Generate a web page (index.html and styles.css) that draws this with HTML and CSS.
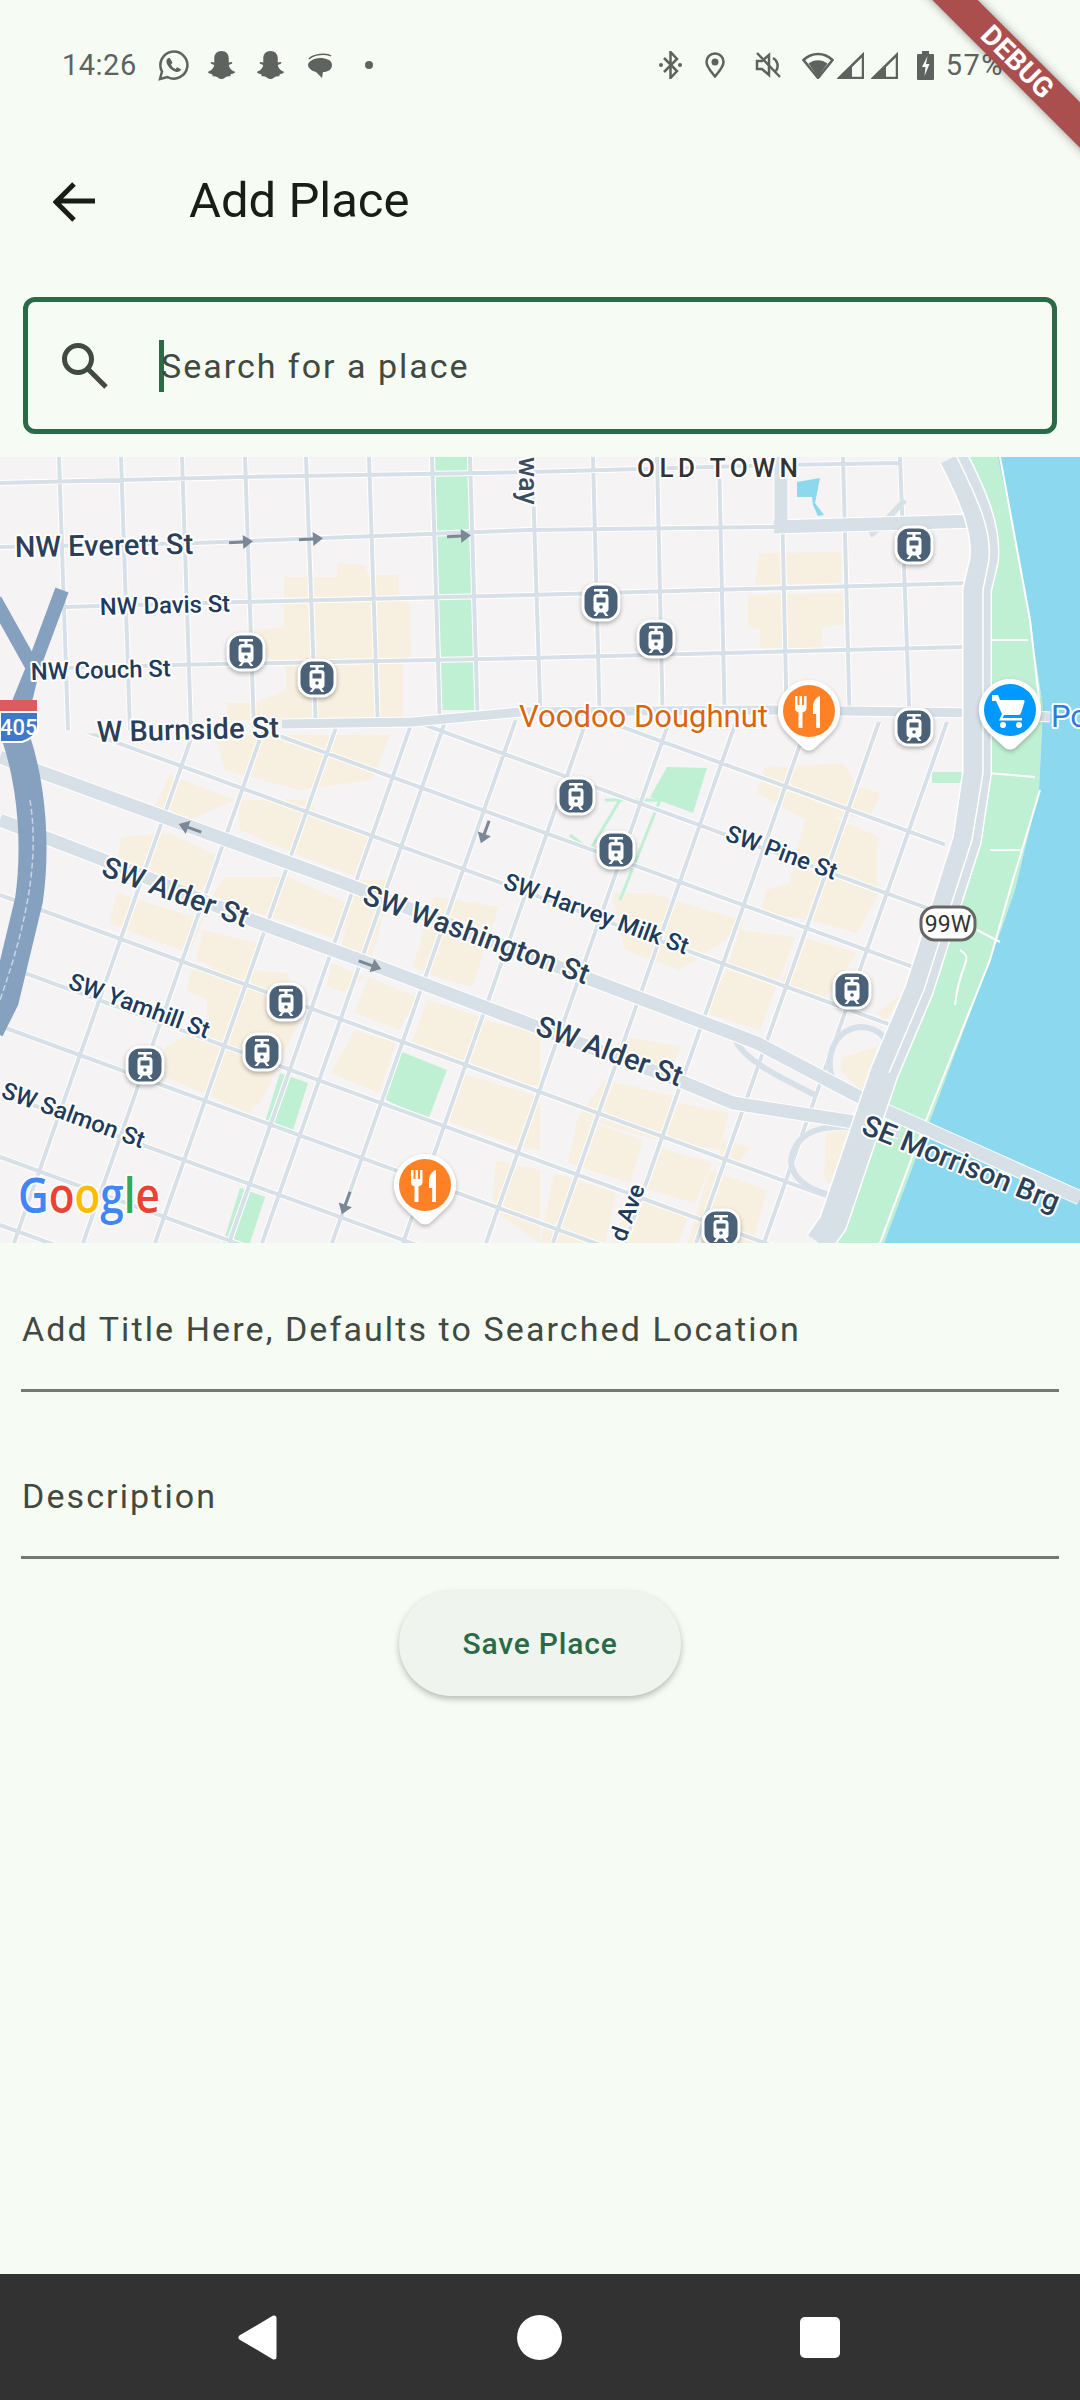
FILE: index.html
```html
<!DOCTYPE html>
<html lang="en">
<head>
    <meta charset="UTF-8">
    <meta name="viewport" content="width=device-width, initial-scale=1.0">
    <title>Add Place</title>
    <link rel="stylesheet" href="styles.css">
</head>
<body>
    <div class="debug-banner">DEBUG</div>

    <div class="status-bar">
        <div class="status-left">
            <span class="status-text">14:26</span>
            <svg class="ic-whatsapp" viewBox="0 0 31 31"><path class="line" d="M2 29l2-7.5A13.5 13.5 0 1 1 9.5 27z"/><path class="solid" d="M10.5 8c-1.5.5-2.5 2.5-2 4.5 1 4 5.500 8.500 10 9.500 2 .3 4-.8 4.500-2.700l-3.800-2-1.700 1.700c-2-.8-3.700-2.500-4.500-4.500l1.500-1.700L11.800 8z"/></svg>
            <svg class="ic-ghost" viewBox="0 0 30 30"><use href="#ghost"/></svg>
            <svg class="ic-ghost ic-ghost2" viewBox="0 0 30 30"><use href="#ghost"/></svg>
            <svg class="ic-bubble" viewBox="0 0 26 25"><path class="solid" d="M13 5c6 0 12 2 12 7s-5 7-8 7h-1l-1 6-6-6C5 18 1 15 1 12s5-7 12-7z"/><path class="line thin" d="M2 6C6 1 20 0 24 3"/></svg>
            <span class="status-dot"></span>
        </div>
        <div class="status-right">
            <svg class="ic-bt" viewBox="0 0 23 28"><path class="line" d="M5 7l13 13-6.500 7V1L18 8 5 21"/><circle class="solid" cx="2" cy="14" r="2"/><circle class="solid" cx="21" cy="14" r="2"/></svg>
            <svg class="ic-pin" viewBox="0 0 20 26"><path class="line" d="M10 1.500A8.500 8.500 0 0 1 18.500 10c0 5-5 10-8.500 14.500C6.500 20 1.500 15 1.500 10A8.500 8.500 0 0 1 10 1.500z"/><circle class="solid" cx="10" cy="10" r="3.500"/></svg>
            <svg class="ic-mute" viewBox="0 0 26 26"><path class="line" d="M2 9h5l7-6v20l-7-6H2z"/><path class="line" d="M18 6a9 9 0 0 1 3 13M2 1l23 24"/></svg>
            <svg class="ic-wifi" viewBox="0 0 32 27"><path class="line" d="M1.500 8C10 0 22 0 30.500 8L16 26z"/><path class="solid" d="M6.500 11.500c5.500-4.500 13.500-4.500 19 0L16 25z"/></svg>
            <svg class="ic-signal" viewBox="0 0 27 27"><path class="line" d="M26 2.500V26H2z"/><path class="solid" d="M15 13v13H2z"/></svg>
            <svg class="ic-signal ic-signal2" viewBox="0 0 27 27"><path class="line" d="M26 2.500V26H2z"/><path class="solid" d="M15 13v13H2z"/></svg>
            <svg class="ic-battery" viewBox="0 0 17 29"><path class="solid" d="M5 0h7v3h4a1 1 0 0 1 1 1v24a1 1 0 0 1-1 1H1a1 1 0 0 1-1-1V4a1 1 0 0 1 1-1h4z"/><path class="cut" d="M10.500 5L5 16h3.500l-1 9 5-12H9z"/></svg>
            <span class="status-text status-pct">57%</span>
        </div>
    </div>

    <div class="app-bar">
        <svg class="back-icon" viewBox="0 0 42 40"><path d="M42 19H4M21 2L3 20l18 18"/></svg>
        <h1>Add Place</h1>
    </div>

    <div class="search-box">
        <svg class="search-icon" viewBox="0 0 46 46"><circle cx="16" cy="16" r="13.500"/><path d="M26 26l18 18"/></svg>
        <span class="caret"></span>
        <span class="search-text">Search for a place</span>
    </div>

    <div class="map">
        <svg viewBox="0 457 1080 786" width="1080" height="786">
            <defs>
                <path id="ghost" d="M15 1c4.500 0 7 3 7 7v4l3-.5c1 .5.5 1.500-.5 2l-2.500 1c.5 3 3 5.500 6 6.500.5 1-1.500 2-4 2.500l-.5 2c-1.500-.3-3.500 0-5 1s-2.500 1.500-3.500 1.500-2-.5-3.500-1.500-3.500-1.300-5-1l-.5-2c-2.500-.5-4.500-1.500-4-2.500 3-1 5.500-3.500 6-6.500l-2.500-1c-1-.5-1.500-1.500-.5-2l3 .5V8c0-4 2.500-7 7-7z"/>
                <clipPath id="south-clip"><path d="M0 735L280 730 520 720 780 722 960 722 955 800 915 975 870 1100 815 1243H0z"/></clipPath>
                <clipPath id="north-clip"><path d="M0 457H960L975 560 965 715 520 716 280 727 60 735 0 600z"/></clipPath>

                <g id="tram">
                    <rect class="tram-bg" x="-18" y="-18" width="36" height="36" rx="13"/>
                    <path class="tram-glyph" d="M-7-13H7v2.500H1.500v2.500H4q3.500 0 3.500 3.500V7q0 3-3 3.200L7.500 14h-3l-2.500-3.500h-4L-4.500 14h-3l3-3.800q-3-.2-3-3.200V-4.500Q-7.500-8-4-8h2.500v-2.500H-7z"/>
                    <rect class="tram-win" x="-4.500" y="-4.500" width="9" height="5"/>
                    <circle class="tram-win" cx="0" cy="5" r="1.800"/>
                </g>
                <path id="marker" class="marker" d="M0-31A31 31 0 0 1 22 22L5 38Q0 41-5 38L-22 22A31 31 0 0 1 0-31z"/>
                <g id="cutlery">
                    <path class="white" d="M-14-15h2.500v9h2v-9h2.500v9h2v-9H-2.500v12q0 3.500-4 4.500V17h-4V1.500q-3.500-1-3.500-4.500z"/>
                    <path class="white" d="M11-15c-4 1-7 6-7 11v7h3.200v14H11z"/>
                </g>
                <path id="arrow" class="arrow" d="M-12-1.500H2V-7L12 0 2 7V1.500H-12z"/>
                <path id="north-lines" d="M59 457L68 730M121 457L130 730M182 457L191 730M245 457L254 730M306 457L316 730M369 457L378 730M432 457L440 730M470 457L478 730M532 457L541 730M593 457L600 730M657 457L663 730M719 457L725 730M781 457L787 730M843 457L850 730M900 457L910 730M0 483L241 477 532 472 780 465 900 463M0 547L196 543 530 530 774 527M65 607L241 602 530 595 970 583M60 668L172 665 530 658 964 647"/>
                <path id="south-lines" d="M0 500L1080 894M0 570L1080 964M0 634L1080 1028M0 700L1080 1094M0 895L1080 1289M0 964L1080 1358M0 1026L1080 1420M0 1093L1080 1487M0 1157L1080 1551M0 1225L1080 1619M14 1243L290 457M83 1243L359 457M155 1243L431 457M229 1243L505 457M262 1243L538 457M332 1243L608 457M403 1243L679 457M486 1243L762 457M553 1243L829 457M625 1243L901 457M696 1243L972 457M764 1243L1040 457"/>
                <path id="thick-lines" d="M781 457V522M774 527L977 521M0 757L344 883 592 980 757 1043 884 1110 1080 1198M0 820L96 857 251 920 379 967 537 1027 685 1083 733 1103 860 1123 900 1132"/>
                <path id="burnside" d="M282 724L413 722 520 712 778 710 980 713 1050 717"/>
                <path id="freeway-e" d="M953 457C975 500 987 530 984 560L977 590V773L967 840 919 990 884 1073 833 1223 819 1243"/>
                <path id="ramps" d="M833 1080C825 1060 832 1030 860 1027 885 1028 892 1045 884 1062L866 1098M850 1127C815 1125 795 1135 791 1160 791 1180 812 1190 829 1195M905 500C885 520 880 530 870 535M735 1040C745 1060 775 1075 815 1095"/>
            </defs>

            <rect class="land" x="0" y="457" width="1080" height="786"/>

            <g class="tan">
                <polygon points="284,577 337,577 337,563 365,565 368,575 399,575 399,595 410,603 411,657 403,663 403,720 227,720 227,703 255,703 286,690 286,668 255,647 255,630 284,627"/>
                <polygon points="759,553 841,552 841,583 755,585"/>
                <polygon points="748,595 843,593 843,625 822,627 822,648 760,648 760,630 748,627"/>
                <polygon points="764,768 843,763 859,787 881,793 870,817 833,817 805,820 757,793"/>
                <polygon points="805,820 833,817 879,837 870,883 826,887 788,890"/>
                <polygon points="215,735 390,735 372,780 300,790 225,770"/>
                <polygon points="170,775 235,800 185,822 150,815"/>
                <polygon points="121,837 169,833 220,857 203,907 152,883 117,870"/>
                <polygon points="224,877 289,877 355,907 339,940 282,920 210,900"/>
                <polygon points="238,800 310,800 327,830 303,857 240,830"/>
                <polygon points="320,817 372,833 358,877 303,857"/>
                <polygon points="117,893 203,920 189,953 134,933 110,923"/>
                <polygon points="203,930 258,943 248,980 196,960"/>
                <polygon points="193,967 289,973 289,980 303,1013 262,1100 248,1113 213,1097 165,1077 165,1047 207,1027 207,1000 186,990"/>
                <polygon points="331,963 365,977 344,992 327,987"/>
                <polygon points="368,977 417,997 399,1030 355,1013"/>
                <polygon points="355,1030 396,1043 379,1093 331,1073"/>
                <polygon points="427,1000 482,1017 461,1067 410,1048"/>
                <polygon points="482,1020 540,1033 540,1087 465,1067"/>
                <polygon points="461,1073 540,1097 540,1150 520,1147 444,1120"/>
                <polygon points="496,1160 540,1170 540,1243 492,1210"/>
                <polygon points="358,880 393,880 372,957 341,947"/>
                <polygon points="434,897 499,907 472,987 437,977 413,967"/>
                <polygon points="612,893 650,893 740,920 743,928 680,970 625,950"/>
                <polygon points="740,930 795,937 760,1030 705,1013 726,970"/>
                <polygon points="802,937 857,953 826,997 781,983"/>
                <polygon points="767,890 791,883 833,840 877,840 877,897 857,933 809,920 760,913"/>
                <polygon points="628,1037 682,1047 668,1072 610,1050"/>
                <polygon points="578,1117 605,1080 678,1097 657,1140"/>
                <polygon points="678,1103 729,1113 719,1150 664,1140"/>
                <polygon points="657,1147 712,1163 695,1203 640,1187"/>
                <polygon points="578,1117 643,1140 630,1183 568,1163"/>
                <polygon points="709,1170 767,1190 753,1243 688,1243"/>
                <polygon points="633,1193 688,1217 678,1243 612,1243"/>
                <polygon points="554,1173 616,1193 605,1243 540,1243"/>
                <polygon points="722,1140 750,1147 736,1167 719,1160"/>
                <polygon points="826,1133 857,1130 833,1187 824,1177"/>
                <polygon points="843,1057 877,1047 864,1093 840,1070"/>
                <polygon points="877,1013 902,993 885,1023"/>
            </g>

            <g class="park">
                <polygon points="435,457 468,457 475,710 441,710"/>
                <polygon points="650,797 667,767 707,768 693,813"/>
                <polygon points="280,1073 308,1083 293,1130 265,1122"/>
                <polygon points="397,1050 447,1070 428,1120 380,1097"/>
                <polygon points="240,1188 265,1197 250,1243 223,1243"/>
                <polygon points="932,772 965,772 965,783 932,783"/>
                <polygon points="965,457 1000,457 1022,573 1043,707 1039,790 1015,890 1001,930 929,1123 884,1243 836,1243 884,1110 929,973 975,840 985,773 985,620 990,540"/>
            </g>
            <path class="park-line" d="M620 800L590 850 570 835M605 800H660L620 900"/>
            <path class="water" d="M998 457H1080V1243H884L929 1123 1001 930 1015 890 1039 790 1043 707 1022 573z"/>
            <path class="water" d="M797 482L820 478 815 503 824 515 818 516 813 505 812 497 797 497z"/>
            <path class="path-white" d="M1000 457L1030 620 1040 707M1040 790L1010 890 990 960 925 1123 880 1243M990 640L1028 640M988 773L1035 777M990 850L1020 850M977 930L1000 942M955 1005C960 960 975 960 960 950"/>

            <!-- streets north of burnside -->
            <g clip-path="url(#north-clip)">
                <use href="#north-lines" class="casing"/>
                <use href="#north-lines" class="minor"/>
            </g>
            <!-- streets south of burnside -->
            <g clip-path="url(#south-clip)">
                <use href="#south-lines" class="casing"/>
                <use href="#south-lines" class="minor"/>
            </g>
            <use href="#ramps" class="casing"/>
            <use href="#ramps" class="minor ramp"/>
            <use href="#burnside" class="casing casing-mid"/>
            <use href="#burnside" class="minor mid"/>
            <use href="#thick-lines" class="casing casing-thick"/>
            <use href="#thick-lines" class="minor thick"/>
            <use href="#freeway-e" class="casing casing-free"/>
            <use href="#freeway-e" class="minor free"/>
            <path class="lane" d="M957 457C978 500 992 530 989 560L983 590V773L972 840 924 990 889 1073"/>

            <!-- I-405 on the left edge -->
            <path class="freeway-x" d="M-5 600L33 668 18 705M62 590L33 668 24 705"/>
            <path class="freeway" d="M16 738C33 790 36 850 29 900L5 1000-10 1030"/>
            <path class="freeway-lane" d="M30 800C38 850 32 910 0 1000"/>
            <path class="shield-top" d="M0 700H37V712H0z"/>
            <path class="shield" d="M0 712H38V730Q34 738 22 742H0z"/>
            <text class="shield-text" x="0" y="735">405</text>

            <use href="#arrow" transform="translate(241 542) rotate(-3)"/>
            <use href="#arrow" transform="translate(311 539) rotate(-3)"/>
            <use href="#arrow" transform="translate(459 536) rotate(-3)"/>
            <use href="#arrow" transform="translate(190 828) rotate(200)"/>
            <use href="#arrow" transform="translate(370 965) rotate(20)"/>
            <use href="#arrow" transform="translate(485 832) rotate(110)"/>
            <use href="#arrow" transform="translate(346 1203) rotate(110)"/>

            <use href="#tram" x="246" y="652"/>
            <use href="#tram" x="317" y="678"/>
            <use href="#tram" x="914" y="545"/>
            <use href="#tram" x="601" y="602"/>
            <use href="#tram" x="656" y="639"/>
            <use href="#tram" x="914" y="727"/>
            <use href="#tram" x="576" y="796"/>
            <use href="#tram" x="616" y="850"/>
            <use href="#tram" x="286" y="1002"/>
            <use href="#tram" x="262" y="1052"/>
            <use href="#tram" x="145" y="1065"/>
            <use href="#tram" x="852" y="990"/>
            <use href="#tram" x="721" y="1228"/>

            <!-- place markers -->
            <g transform="translate(809 711)">
                <use href="#marker"/>
                <circle class="pin-food" r="26"/>
                <use href="#cutlery"/>
            </g>
            <g transform="translate(425 1185)">
                <use href="#marker"/>
                <circle class="pin-food" r="26"/>
                <use href="#cutlery"/>
            </g>
            <g transform="translate(1010 710)">
                <use href="#marker"/>
                <circle class="pin-shop" r="26"/>
                <path class="white" d="M-18-15h6l2 5h23q2 0 1.500 2L11 3q-.5 2-2.500 2H-6l-1.500 3H12v2.500H-11l3-6.500-6-13h-4z"/>
                <circle class="white" cx="-7" cy="15" r="3"/>
                <circle class="white" cx="9" cy="15" r="3"/>
            </g>

            <text class="lbl lbl-old" x="637" y="477">OLD TOWN</text>
            <text class="lbl lbl-street" transform="translate(519 457) rotate(90)">way</text>
            <text class="lbl lbl-big" transform="translate(15 557) rotate(-1)">NW Everett St</text>
            <text class="lbl lbl-sm" transform="translate(100 615) rotate(-1.500)">NW Davis St</text>
            <text class="lbl lbl-sm" transform="translate(31 680) rotate(-1.500)">NW Couch St</text>
            <text class="lbl lbl-big" transform="translate(97 742) rotate(-1.500)">W Burnside St</text>
            <text class="lbl lbl-big" transform="translate(100 875) rotate(20)">SW Alder St</text>
            <text class="lbl lbl-big" transform="translate(361 903) rotate(20)">SW Washington St</text>
            <text class="lbl lbl-big" transform="translate(534 1034) rotate(20)">SW Alder St</text>
            <text class="lbl lbl-sm" transform="translate(67 988) rotate(20)">SW Yamhill St</text>
            <text class="lbl lbl-sm" transform="translate(0 1097) rotate(20)">SW Salmon St</text>
            <text class="lbl lbl-sm" transform="translate(502 888) rotate(20)">SW Harvey Milk St</text>
            <text class="lbl lbl-sm" transform="translate(724 840) rotate(20)">SW Pine St</text>
            <text class="lbl lbl-big" transform="translate(860 1133) rotate(22)">SE Morrison Brg</text>
            <text class="lbl lbl-sm" transform="translate(625 1243) rotate(-70)">d Ave</text>
            <text class="lbl lbl-food" x="519" y="727">Voodoo Doughnut</text>
            <text class="lbl lbl-shop" x="1051" y="727">Po</text>

            <rect class="route-badge" x="921" y="907" width="54" height="33" rx="14"/>
            <text class="route-text" x="948" y="932">99W</text>

            <text class="google" x="18" y="1213" textLength="142" lengthAdjust="spacingAndGlyphs"><tspan class="g-blue">G</tspan><tspan class="g-red">o</tspan><tspan class="g-yellow">o</tspan><tspan class="g-blue">g</tspan><tspan class="g-green">l</tspan><tspan class="g-red">e</tspan></text>
        </svg>
    </div>

    <div class="field field-first"><span>Add Title Here, Defaults to Searched Location</span></div>
    <div class="field field-second"><span>Description</span></div>

    <div class="actions">
        <button class="save-btn">Save Place</button>
    </div>

    <div class="nav-bar">
        <svg class="nav-back" viewBox="0 0 40 45"><path d="M36 3V42L3 22.500z"/></svg>
        <span class="nav-home"></span>
        <span class="nav-recent"></span>
    </div>
</body>
</html>
```
FILE: styles.css
```css
* {
    box-sizing: border-box;
}
body {
    margin: 0;
    width: 1080px;
    height: 2400px;
    overflow: hidden;
    position: relative;
    display: flex;
    flex-direction: column;
    background: #f6fbf3;
    font-family: Roboto, sans-serif;
    color: #414941;
}

/* debug ribbon */
.debug-banner {
    position: absolute;
    left: 817px;
    top: 46px;
    width: 400px;
    height: 32px;
    line-height: 32px;
    text-align: center;
    transform: rotate(45deg);
    background: #ab4e4e;
    box-shadow: 0 0 10px rgba(0, 0, 0, 0.4);
    color: white;
    font-size: 28px;
    font-weight: 700;
}

/* status bar */
.status-bar {
    height: 130px;
    display: flex;
    justify-content: space-between;
    align-items: center;
    padding: 0 76px 0 62px;
}
.status-left, .status-right {
    display: flex;
    align-items: center;
}
.status-text {
    font-size: 29px;
    color: #5f635f;
    letter-spacing: 0.5px;
}
.status-bar svg {
    display: block;
}
.line {
    fill: none;
    stroke: #5f635f;
    stroke-width: 2.5;
}
.thin {
    stroke-width: 1.5;
}
.solid, .status-bar use {
    fill: #5f635f;
}
.cut {
    fill: #f6fbf3;
}
.ic-whatsapp { width: 31px; height: 31px; margin-left: 21px; }
.ic-ghost { width: 31px; height: 31px; margin-left: 17px; }
.ic-ghost2 { margin-left: 18px; }
.ic-bubble { width: 26px; height: 25px; margin-left: 21px; }
.status-dot {
    width: 8px;
    height: 8px;
    border-radius: 50%;
    background: #5f635f;
    margin-left: 32px;
}
.ic-bt { width: 23px; height: 28px; }
.ic-pin { width: 20px; height: 26px; margin-left: 23px; }
.ic-mute { width: 26px; height: 26px; margin-left: 30px; }
.ic-wifi { width: 32px; height: 27px; margin-left: 21px; }
.ic-signal { width: 27px; height: 27px; margin-left: 3px; }
.ic-signal2 { margin-left: 7px; }
.ic-battery { width: 17px; height: 29px; margin-left: 19px; }
.status-pct { margin-left: 12px; letter-spacing: 1.5px; }

/* app bar */
.app-bar {
    height: 138px;
    display: flex;
    align-items: center;
    padding-left: 53px;
}
.back-icon {
    width: 42px;
    height: 40px;
    margin-top: 6px;
    fill: none;
    stroke: #191d18;
    stroke-width: 5;
}
.app-bar h1 {
    margin: 2px 0 0 94px;
    font-size: 49px;
    font-weight: 400;
    color: #191d18;
}

/* search */
.search-box {
    margin: 29px 23px 0;
    height: 137px;
    border: 5px solid #2a6a47;
    border-radius: 12px;
    display: flex;
    align-items: center;
    padding-left: 34px;
}
.search-icon {
    width: 46px;
    height: 46px;
    fill: none;
    stroke: #414941;
    stroke-width: 5;
}
.caret {
    width: 5px;
    height: 52px;
    background: #2a6a47;
    margin-left: 51px;
}
.search-text {
    font-size: 34px;
    letter-spacing: 2px;
    margin-left: -3px;
}

/* map */
.map {
    margin-top: 23px;
    height: 786px;
    overflow: hidden;
}
.map svg {
    display: block;
}
.land { fill: #f5f3f4; }
.tan { fill: #f7f0e0; }
.park { fill: #c0f0d4; }
.park-line { fill: none; stroke: #c0f0d4; stroke-width: 3; }
.water { fill: #8cd8ee; }
.path-white { fill: none; stroke: #fff; stroke-width: 2; }
.casing { fill: none; stroke: #fff; stroke-width: 6; }
.minor { fill: none; stroke: #d7e0e7; stroke-width: 4; }
.ramp { stroke-width: 6; }
.mid { stroke-width: 9; }
.casing-mid { stroke-width: 11; }
.thick { stroke-width: 13; }
.casing-thick { stroke-width: 15; }
.free { stroke-width: 27; }
.casing-free { stroke-width: 30; }
.lane { fill: none; stroke: #fff; stroke-width: 1.5; }
.freeway-x { fill: none; stroke: #86a1c0; stroke-width: 14; }
.freeway { fill: none; stroke: #86a1c0; stroke-width: 28; }
.freeway-lane { fill: none; stroke: #c6d4e4; stroke-width: 1.5; stroke-dasharray: 6 3; }
.shield { fill: #3f78c4; stroke: #fff; stroke-width: 2; }
.shield-top { fill: #de5a5f; }
.shield-text { fill: #fff; font-size: 22px; font-weight: 500; }
.arrow { fill: #7c8895; }
.tram-bg {
    fill: #4a6178;
    stroke: #fff;
    stroke-width: 3;
    filter: drop-shadow(0 2px 2px rgba(0, 0, 0, 0.3));
}
.tram-glyph { fill: #fff; }
.tram-win { fill: #4a6178; }
.marker {
    fill: #fff;
    filter: drop-shadow(0 2px 2px rgba(0, 0, 0, 0.25));
}
.white { fill: #fff; }
.pin-food { fill: #ff8126; }
.pin-shop { fill: #0099ff; }

.lbl {
    paint-order: stroke;
    stroke: #fff;
    stroke-width: 4px;
    stroke-linejoin: round;
    fill: #203a5c;
    font-weight: 500;
}
.lbl-big { font-size: 29px; fill: #2c3f58; }
.lbl-sm { font-size: 23.8px; }
.lbl-street { font-size: 27px; fill: #3c4c60; }
.lbl-old { font-size: 26px; letter-spacing: 4.5px; fill: #333; }
.lbl-food { font-size: 31px; font-weight: 400; fill: #d9650e; }
.lbl-shop { font-size: 31px; font-weight: 400; fill: #2a7ee0; }
.route-badge { fill: #fff; stroke: #666; stroke-width: 3; }
.route-text { fill: #333; font-size: 23px; text-anchor: middle; }

.google {
    font-family: "Open Sans", sans-serif;
    font-size: 49px;
    font-weight: 600;
    paint-order: stroke;
    stroke: rgba(255, 255, 255, 0.8);
    stroke-width: 4px;
}
.g-blue { fill: #4285f4; }
.g-red { fill: #ea4335; }
.g-yellow { fill: #fbbc05; }
.g-green { fill: #34a853; }

/* form */
.field {
    margin: 0 21px;
    display: flex;
    flex-direction: column;
    justify-content: flex-end;
    border-bottom: 3px solid #75796f;
    padding: 0 0 40px 1px;
    font-size: 34px;
    letter-spacing: 2.1px;
    line-height: 40px;
}
.field-first { height: 149px; }
.field-second { height: 167px; }
.actions {
    display: flex;
    justify-content: center;
    padding-top: 32px;
    flex: 1;
    align-items: flex-start;
}
.save-btn {
    width: 282px;
    height: 105px;
    border: none;
    border-radius: 53px;
    background: #f0f4ee;
    color: #2a6a47;
    font-family: Roboto, sans-serif;
    font-size: 30px;
    font-weight: 500;
    letter-spacing: 0.8px;
    box-shadow: 0 3px 6px rgba(0, 0, 0, 0.25);
}

/* nav bar */
.nav-bar {
    height: 126px;
    background: #323232;
    display: flex;
    align-items: center;
}
.nav-back {
    width: 40px;
    height: 45px;
    margin-left: 238px;
    fill: #fff;
    stroke: #fff;
    stroke-width: 5;
    stroke-linejoin: round;
}
.nav-home {
    width: 45px;
    height: 45px;
    border-radius: 50%;
    background: #fff;
    margin-left: 239px;
}
.nav-recent {
    width: 40px;
    height: 41px;
    border-radius: 5px;
    background: #fff;
    margin-left: 238px;
}
```
